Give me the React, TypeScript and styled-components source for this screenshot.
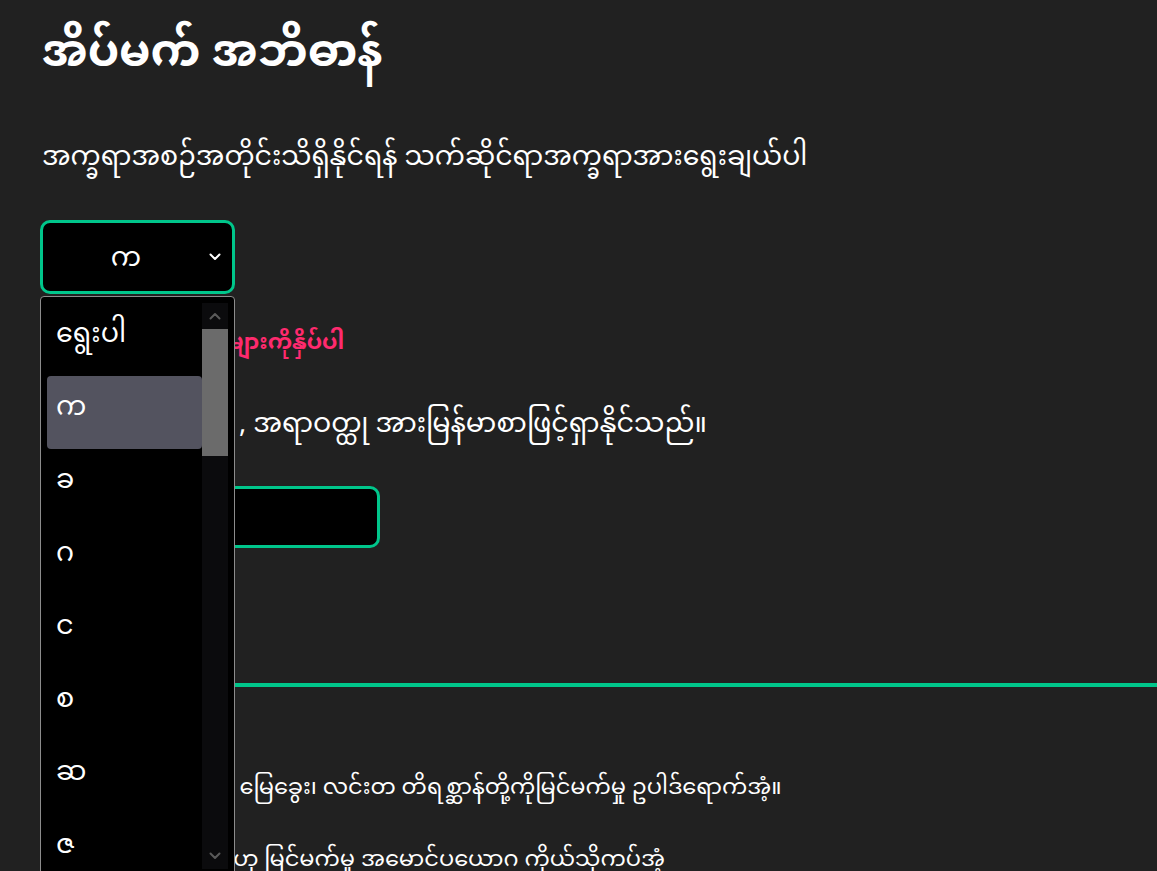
import React from "react";
import styled, { createGlobalStyle } from "styled-components";

const GREEN = "#00c68b";
const MM = `"Noto Sans Myanmar", "Noto Sans Myanmar UI", Padauk, "Myanmar Text", "Noto Sans", sans-serif`;

const Global = createGlobalStyle`
  html, body { margin: 0; padding: 0; background: #212121; }
  body { font-family: ${MM}; color: #ffffff; overflow: hidden; }
`;

const Page = styled.main`
  padding: 0 0 0 40px;
  display: flex;
  flex-direction: column;
`;

const Title = styled.h1`
  margin: 20px 0 0 2px;
  font-size: 45px;
  font-weight: 700;
  line-height: 72px;
`;

const Intro = styled.p`
  margin: 46px 0 0 2px;
  font-size: 26.8px;
  line-height: 43px;
`;

const SelectWrap = styled.div`
  position: relative;
  margin-top: 39px;
  width: 195px;
`;

const SelectBox = styled.div`
  box-sizing: border-box;
  height: 74px;
  width: 195px;
  border: 3px solid ${GREEN};
  border-radius: 10px;
  background: #000;
  display: flex;
  align-items: center;
  padding: 0 11px 0 0;
`;

const SelectValue = styled.span`
  flex: 1;
  text-align: center;
  font-size: 27px;
  padding: 4px 0 0 0;
`;

const Dropdown = styled.div`
  position: absolute;
  top: 76px;
  left: 0;
  width: 195px;
  height: 580px;
  box-sizing: border-box;
  background: #000;
  border: 1px solid #8c8c8c;
  border-radius: 4px;
  display: flex;
  overflow: hidden;
  z-index: 5;
`;

const OptionList = styled.div`
  flex: 1;
  display: flex;
  flex-direction: column;
  padding: 6px 0 0 6px;
`;

const Option = styled.div<{ $active?: boolean }>`
  flex-shrink: 0;
  height: 73px;
  display: flex;
  align-items: center;
  padding: 0 0 8px 9px;
  box-sizing: border-box;
  border-radius: 4px;
  font-size: 27px;
  background: ${(p) => (p.$active ? "#53535f" : "transparent")};
`;

const Scrollbar = styled.div`
  flex-shrink: 0;
  width: 26px;
  margin: 6px 6px 6px 0;
  background: #0b0b0d;
  display: flex;
  flex-direction: column;
`;

const ScrollArrow = styled.div`
  height: 26px;
  display: flex;
  align-items: center;
  justify-content: center;
`;

const Thumb = styled.div`
  height: 127px;
  background: #6b6b6b;
`;

const Track = styled.div`
  flex: 1;
`;

const Hint = styled.p`
  margin: 32px 0 0 2px;
  font-size: 22px;
  font-weight: 700;
  color: #ff2a6e;
  line-height: 36px;
`;

const Search = styled.p`
  margin: 42px 0 0 2px;
  font-size: 27px;
  line-height: 43px;
`;

const SearchInput = styled.div`
  margin-top: 39px;
  box-sizing: border-box;
  width: 340px;
  height: 62px;
  border: 3px solid ${GREEN};
  border-radius: 10px;
  background: #000;
`;

const Divider = styled.hr`
  margin: 135px 0 0 0;
  border: none;
  height: 4px;
  background: ${GREEN};
  width: 100%;
`;

const Items = styled.ul`
  list-style: none;
  margin: 84px 0 0 2px;
  padding: 0;
  display: flex;
  flex-direction: column;
  gap: 36px;
`;

const Item = styled.li`
  font-size: 22.5px;
  line-height: 36px;
  white-space: nowrap;
`;

const Chevron = ({ color = "#fff", up = false }: { color?: string; up?: boolean }) => (
  <svg width="12" height="8" viewBox="0 0 12 8" fill="none">
    <path
      d={up ? "M1.5 6.5L6 2L10.5 6.5" : "M1.5 1.5L6 6L10.5 1.5"}
      stroke={color}
      strokeWidth="2"
      strokeLinecap="round"
      strokeLinejoin="round"
    />
  </svg>
);

const options = ["ရွေးပါ", "က", "ခ", "ဂ", "င", "စ", "ဆ", "ဇ", "ဈ"];

export default function App() {
  return (
    <>
      <Global />
      <Page>
        <Title>အိပ်မက် အဘိဓာန်</Title>
        <Intro>အက္ခရာအစဉ်အတိုင်းသိရှိနိုင်ရန် သက်ဆိုင်ရာအက္ခရာအားရွေးချယ်ပါ</Intro>
        <SelectWrap>
          <SelectBox>
            <SelectValue>က</SelectValue>
            <Chevron />
          </SelectBox>
          <Dropdown>
            <OptionList>
              {options.map((o) => (
                <Option key={o} $active={o === "က"}>
                  {o}
                </Option>
              ))}
            </OptionList>
            <Scrollbar>
              <ScrollArrow>
                <Chevron up color="#5a5a5a" />
              </ScrollArrow>
              <Thumb />
              <Track />
              <ScrollArrow>
                <Chevron color="#5a5a5a" />
              </ScrollArrow>
            </Scrollbar>
          </Dropdown>
        </SelectWrap>
        <Hint>ရှာလိုသောစကားလုံးများကိုနှိပ်ပါ</Hint>
        <Search>လူသား ၊ သတ္တဝါ , အရာဝတ္ထု အားမြန်မာစာဖြင့်ရှာနိုင်သည်။</Search>
        <SearchInput />
        <Divider />
        <Items>
          <Item>ခွေး၊ ကြောင်၊ ကြက်၊ မြေခွေး၊ လင်းတ တိရစ္ဆာန်တို့ကိုမြင်မက်မှု ဥပါဒ်ရောက်အံ့။</Item>
          <Item>နတ်ဆိုး ကိုယ်ပူးကပ်ဟု မြင်မက်မှု အမောင်ပယောဂ ကိုယ်သိုကပ်အံ့</Item>
        </Items>
      </Page>
    </>
  );
}
